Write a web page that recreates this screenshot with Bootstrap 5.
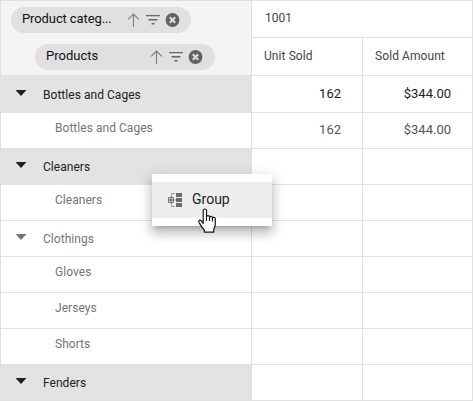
<!DOCTYPE html>
<html lang="en">
<head>
<meta charset="utf-8">
<title>Pivot table</title>
<link href="https://cdn.jsdelivr.net/npm/bootstrap@5.3.0/dist/css/bootstrap.min.css" rel="stylesheet">
<style>
body{font-family:Roboto,"Liberation Sans",sans-serif;font-size:12px;line-height:16px;color:#444;background:#fff;overflow:hidden}
.pivot{width:473px;height:401px;border:1px solid #e0e0e0}
.axis{height:74px;background:#f4f4f4;padding:6px 10px 0}
.left-pane{width:250px}
.right-pane{width:221px;border-left:1px solid #e0e0e0}
.chip{width:180px;height:26px;background:#e0e0e0;font-size:13px;color:#111;padding:0 10px 0 11px}
.chip+.chip{margin:11px 0 0 24px;padding-right:11px}
.chip svg{display:block}
.chip span{padding-bottom:2px}
.tight{letter-spacing:-.1px}
.head-top{height:37px;border-bottom:1px solid #e0e0e0;padding:9px 13px}
.head-bot{height:37px}
.head-bot>div{padding:10px 12px;letter-spacing:.08px}
.cells>.c1{width:111px;border-right:1px solid #e0e0e0}
.cells>.c2{width:109px}
.mem{height:36px;border-top:1px solid #e0e0e0;padding-left:42px;padding-top:10px;color:#757575;position:relative;letter-spacing:.04px}
.mem.first,.vals.first{height:37px}
.mem.first{padding-top:11px}
.mem.leaf{padding-left:54px;padding-top:7px}
.mem.total{background:#e3e3e3;color:#212121}
.mem.shaded-above{border-top-color:#e3e3e3}
.caret{position:absolute;left:14px;top:13px}
.first .caret{top:14px}
.vals{height:36px;border-top:1px solid #e0e0e0;font-size:13px;color:#555}
.vals.first{color:#222}
.vals>div{padding:9px 21px 0 0;text-align:right}
.vals.first>div{padding-top:10px}
.menu{position:absolute;left:152px;top:174px;width:120px;height:52px;background:#fff;padding:8px 0;box-shadow:0 5px 5px -3px rgba(0,0,0,.2),0 8px 10px 1px rgba(0,0,0,.14),0 3px 14px 2px rgba(0,0,0,.12)}
.menu-row{height:36px;background:#eee;font-size:14px;color:#212121;padding:0 0 1px 16px;gap:10px}
.menu-row svg{margin-top:1px}
.menu-row span{padding-bottom:2px}
.pointer{position:absolute;left:197px;top:208px}
</style>
<script src="https://cdn.jsdelivr.net/npm/bootstrap@5.3.0/dist/js/bootstrap.bundle.min.js"></script>
</head>
<body>
<svg width="0" height="0" class="position-absolute">
<symbol id="tools" viewBox="0 0 54 16"><path d="M6.500 15V2M1.200 7.300L6.500 2l5.300 5.300" fill="none" stroke="#7d7d7d" stroke-width="1.100"/><path d="M19 3.600h14M21.500 7.700h9M24.500 11.800h3" fill="none" stroke="#666" stroke-width="1.400"/><circle cx="45.500" cy="8" r="6.900" fill="#616161"/><path d="M42.800 5.300l5.400 5.400m0-5.400l-5.400 5.400" stroke="#e0e0e0" stroke-width="2"/></symbol>
<symbol id="tri" viewBox="0 0 12 6"><path d="M.5 0h11L6 6z" fill="currentColor"/></symbol>
</svg>
<main class="pivot d-flex">
<section class="left-pane">
<div class="axis">
<div class="chip rounded-pill d-flex align-items-center justify-content-between"><span class="tight">Product categ...</span><svg width="54" height="16"><use href="#tools"/></svg></div>
<div class="chip rounded-pill d-flex align-items-center justify-content-between"><span>Products</span><svg width="54" height="16"><use href="#tools"/></svg></div>
</div>
<div class="mem total first"><svg class="caret" width="12" height="6"><use href="#tri"/></svg>Bottles and Cages</div>
<div class="mem leaf shaded-above">Bottles and Cages</div>
<div class="mem total"><svg class="caret" width="12" height="6"><use href="#tri"/></svg>Cleaners</div>
<div class="mem leaf shaded-above">Cleaners</div>
<div class="mem"><svg class="caret" width="12" height="6"><use href="#tri"/></svg>Clothings</div>
<div class="mem leaf">Gloves</div>
<div class="mem leaf">Jerseys</div>
<div class="mem leaf">Shorts</div>
<div class="mem total"><svg class="caret" width="12" height="6"><use href="#tri"/></svg>Fenders</div>
</section>
<section class="right-pane">
<div class="head-top">1001</div>
<div class="head-bot cells d-flex"><div class="c1">Unit Sold</div><div class="c2">Sold Amount</div></div>
<div class="vals first cells d-flex"><div class="c1">162</div><div class="c2">$344.00</div></div>
<div class="vals cells d-flex"><div class="c1">162</div><div class="c2">$344.00</div></div>
<div class="vals cells d-flex"><div class="c1"></div><div class="c2"></div></div>
<div class="vals cells d-flex"><div class="c1"></div><div class="c2"></div></div>
<div class="vals cells d-flex"><div class="c1"></div><div class="c2"></div></div>
<div class="vals cells d-flex"><div class="c1"></div><div class="c2"></div></div>
<div class="vals cells d-flex"><div class="c1"></div><div class="c2"></div></div>
<div class="vals cells d-flex"><div class="c1"></div><div class="c2"></div></div>
<div class="vals cells d-flex"><div class="c1"></div><div class="c2"></div></div>
</section>
</main>
<div class="menu"><div class="menu-row d-flex align-items-center"><svg width="14" height="14" viewBox="0 0 14 14"><path d="M8 0h6v4H8zM8 5h6v4H8zM8 10h6v4H8z" fill="#6b6b6b"/><path d="M3.500 4V.5H7M3.500 10v3.500H7M6 7h2" fill="none" stroke="#999" stroke-width="1"/><path d="M.5 4.500h5v5h-5z" fill="#eee" stroke="#777"/><path d="M3 5v4M1 7h4" stroke="#555"/></svg><span>Group</span></div></div>
<svg class="pointer" width="20" height="26" viewBox="0 0 20 26"><path d="M6.200 15.500V2.700c0-2.300 3.300-2.300 3.300 0v6c.3-1.700 3-1.500 3 .5.500-1.400 2.900-1.100 2.900.8.600-1.200 2.900-.8 2.900 1.200v5.300c0 2.200-1.600 3.500-1.600 5.300v2.400H7.400v-1.900c-1.600-2-3.800-5-5.300-7.700-1.100-2.200 1-3.200 2.400-1.600z" fill="#fff" stroke="#14142a" stroke-width="1.200" stroke-linejoin="round"/><path d="M9.500 8v5M12.500 9v4M15.400 10v3.500" fill="none" stroke="#14142a" stroke-width="1.100"/></svg>
</body>
</html>
